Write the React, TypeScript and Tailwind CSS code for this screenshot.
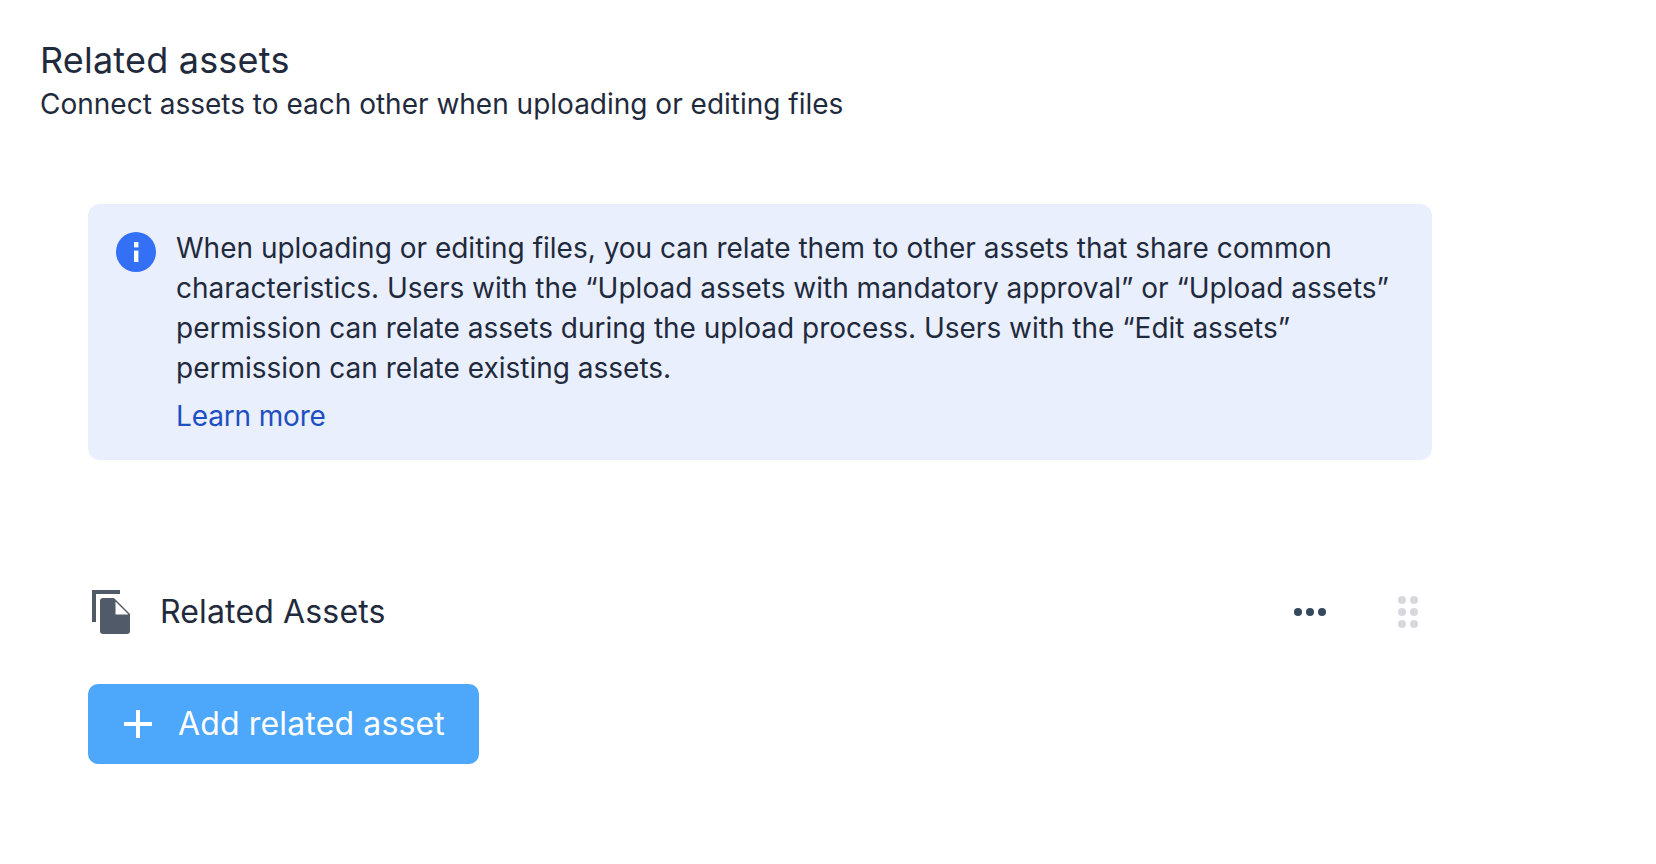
export default function App() {
  return (
    <div className="min-h-screen bg-white pl-10 pt-[40px] font-['Inter',sans-serif] text-[#1f2a3d]">
      <h1 className="text-[36px] font-normal leading-[40px] tracking-[0.2px]">Related assets</h1>
      <p className="mt-[4px] text-[28px] leading-[40px]">Connect assets to each other when uploading or editing files</p>

      <div className="ml-12 mt-[80px] w-[1344px]">
        <div className="flex gap-5 rounded-xl bg-[#e9effc] px-7 pb-6 pt-6">
          <svg width="40" height="40" viewBox="0 0 40 40" className="mt-1 shrink-0">
            <circle cx="20" cy="20" r="20" fill="#3370f5" />
            <rect x="18" y="10" width="4.4" height="5.4" fill="#fff" />
            <rect x="18" y="18.6" width="4.4" height="11.4" fill="#fff" />
          </svg>
          <div className="text-[28px] leading-[40px]">
            <p>
              When uploading or editing files, you can relate them to other assets that share common characteristics.
              Users with the “Upload assets with mandatory approval” or “Upload assets” permission can relate assets
              during the upload process. Users with the “Edit assets” permission can relate existing assets.
            </p>
            <a className="mt-2 block tracking-[-0.15px] text-[#1d4ec2]">Learn more</a>
          </div>
        </div>

        <div className="mt-[130px] flex items-center">
          <svg width="38" height="44" viewBox="0 0 38 44" className="ml-1 shrink-0 text-[#515a68]">
            <path d="M0 0h28v4H4v28H0z" fill="currentColor" />
            <path
              d="M11 8h11l16 16v17a3 3 0 0 1-3 3H11a3 3 0 0 1-3-3V11a3 3 0 0 1 3-3z"
              fill="currentColor"
            />
            <path d="M23.5 11.5L36.5 24.5H23.5z" fill="#fff" />
          </svg>
          <span className="ml-[30px] text-[32px] leading-[40px] tracking-[0.15px]">Related Assets</span>
          <div className="ml-auto flex items-center gap-[4px]">
            <span className="size-2 rounded-full bg-[#364a5e]" />
            <span className="size-2 rounded-full bg-[#364a5e]" />
            <span className="size-2 rounded-full bg-[#364a5e]" />
          </div>
          <div className="ml-[72px] mr-[14px] grid grid-cols-2 gap-1">
            {[0, 1, 2, 3, 4, 5].map((dot) => (
              <span key={dot} className="size-2 rounded-full bg-[#d6d8dd]" />
            ))}
          </div>
        </div>

        <button
          type="button"
          className="mt-[50px] flex h-20 w-[391px] items-center gap-[26px] rounded-[10px] bg-[#4da7fa] pl-9 text-[32px] tracking-[0.15px] text-white"
        >
          <svg width="28" height="28" viewBox="0 0 28 28" className="shrink-0">
            <path d="M14 0v28M0 14h28" stroke="#fff" strokeWidth="4" fill="none" />
          </svg>
          Add related asset
        </button>
      </div>
    </div>
  );
}
